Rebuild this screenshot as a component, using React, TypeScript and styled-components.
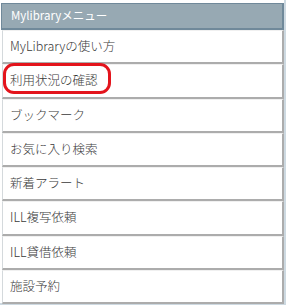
import React, { FC } from "react";
import styled, { createGlobalStyle } from "styled-components";

const GlobalStyle = createGlobalStyle`
  html, body {
    margin: 0;
    padding: 0;
    background: #ffffff;
  }
`;

const Container = styled.div`
  width: 286px;
  height: 305px;
  padding-top: 3px;
  box-sizing: border-box;
  border-right: 2px solid #cdd9e1;
  border-bottom: 2px solid #cdd9e1;
  font-family: "Noto Sans CJK JP", "Liberation Sans", sans-serif;
`;

const Header = styled.div`
  height: 27px;
  box-sizing: border-box;
  margin-left: 1px;
  background: #97a9b3;
  border: 1px solid #70899a;
  border-width: 1px 2px 2px 1px;
  color: #ffffff;
  font-size: 11.5px;
  line-height: 23px;
  padding-left: 9px;
`;

const MenuList = styled.ul`
  list-style: none;
  margin: 0;
  padding: 0;
  display: flex;
  flex-direction: column;
`;

const MenuItem = styled.li`
  position: relative;
  height: 34.3px;
  box-sizing: border-box;
  margin-left: 2px;
  border-left: 1px solid #d4d9dc;
  border-right: 2px solid #acacac;
  border-bottom: 2px solid #acacac;
  border-top: 1px solid #f0f0f0;
  padding-left: 7px;
  color: #3a3a3a;
  font-size: 12.5px;
  font-weight: 300;
  line-height: 29px;
`;

const Highlight = styled.span`
  position: absolute;
  left: 0px;
  top: -2px;
  width: 102px;
  height: 25px;
  border: 3px solid #e3141c;
  border-radius: 11px;
  pointer-events: none;
`;

interface Item {
  label: string;
  marked?: boolean;
}

const items: Item[] = [
  { label: "MyLibraryの使い方" },
  { label: "利用状況の確認", marked: true },
  { label: "ブックマーク" },
  { label: "お気に入り検索" },
  { label: "新着アラート" },
  { label: "ILL複写依頼" },
  { label: "ILL貸借依頼" },
  { label: "施設予約" },
];

const App: FC = () => {
  return (
    <>
      <GlobalStyle />
      <Container>
        <Header>Mylibraryメニュー</Header>
        <MenuList>
          {items.map((item) => (
            <MenuItem key={item.label}>
              {item.label}
              {item.marked && <Highlight />}
            </MenuItem>
          ))}
        </MenuList>
      </Container>
    </>
  );
};

export default App;
